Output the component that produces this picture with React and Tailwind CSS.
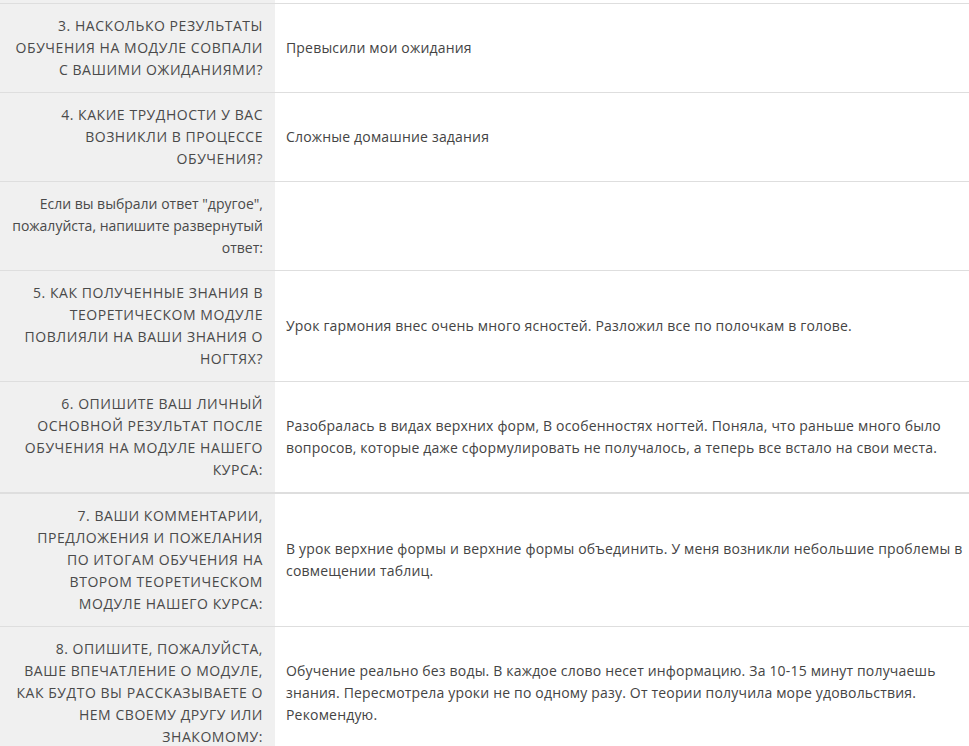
const rows = [
  {
    q: ['3. НАСКОЛЬКО РЕЗУЛЬТАТЫ', 'ОБУЧЕНИЯ НА МОДУЛЕ СОВПАЛИ', 'С ВАШИМИ ОЖИДАНИЯМИ?'],
    a: ['Превысили мои ожидания'],
  },
  {
    q: ['4. КАКИЕ ТРУДНОСТИ У ВАС', 'ВОЗНИКЛИ В ПРОЦЕССЕ', 'ОБУЧЕНИЯ?'],
    a: ['Сложные домашние задания'],
  },
  {
    q: ['Если вы выбрали ответ "другое",', 'пожалуйста, напишите развернутый', 'ответ:'],
    a: [],
    plain: true,
  },
  {
    q: ['5. КАК ПОЛУЧЕННЫЕ ЗНАНИЯ В', 'ТЕОРЕТИЧЕСКОМ МОДУЛЕ', 'ПОВЛИЯЛИ НА ВАШИ ЗНАНИЯ О', 'НОГТЯХ?'],
    a: ['Урок гармония внес очень много ясностей. Разложил все по полочкам в голове.'],
  },
  {
    q: ['6. ОПИШИТЕ ВАШ ЛИЧНЫЙ', 'ОСНОВНОЙ РЕЗУЛЬТАТ ПОСЛЕ', 'ОБУЧЕНИЯ НА МОДУЛЕ НАШЕГО', 'КУРСА:'],
    a: [
      'Разобралась в видах верхних форм, В особенностях ногтей. Поняла, что раньше много было',
      'вопросов, которые даже сформулировать не получалось, а теперь все встало на свои места.',
    ],
    thick: true,
  },
  {
    q: [
      '7. ВАШИ КОММЕНТАРИИ,',
      'ПРЕДЛОЖЕНИЯ И ПОЖЕЛАНИЯ',
      'ПО ИТОГАМ ОБУЧЕНИЯ НА',
      'ВТОРОМ ТЕОРЕТИЧЕСКОМ',
      'МОДУЛЕ НАШЕГО КУРСА:',
    ],
    a: [
      'В урок верхние формы и верхние формы объединить. У меня возникли небольшие проблемы в',
      'совмещении таблиц.',
    ],
  },
  {
    q: [
      '8. ОПИШИТЕ, ПОЖАЛУЙСТА,',
      'ВАШЕ ВПЕЧАТЛЕНИЕ О МОДУЛЕ,',
      'КАК БУДТО ВЫ РАССКАЗЫВАЕТЕ О',
      'НЕМ СВОЕМУ ДРУГУ ИЛИ',
      'ЗНАКОМОМУ:',
    ],
    a: [
      'Обучение реально без воды. В каждое слово несет информацию. За 10-15 минут получаешь',
      'знания. Пересмотрела уроки не по одному разу. От теории получила море удовольствия.',
      'Рекомендую.',
    ],
  },
];

function Row({ q, a, thick, plain }) {
  return (
    <div className={`flex ${thick ? 'border-b-2' : 'border-b'} border-[#dedede]`}>
      <div
        className={`w-[275px] shrink-0 bg-[#f0f0f0] py-[11px] pl-3 pr-3 text-right text-[#4a4a4a] ${
          plain ? '' : 'tracking-[0.55px]'
        }`}
      >
        {q.map((line, i) => (
          <div key={i} className="whitespace-nowrap">{line}</div>
        ))}
      </div>
      <div className="flex-1 flex flex-col justify-center py-[11px] pl-[11px] pr-2 text-[#444] tracking-[0.18px]">
        {a.map((line, i) => (
          <div key={i} className="whitespace-nowrap">{line}</div>
        ))}
      </div>
    </div>
  );
}

export default function App() {
  return (
    <div
      className="w-[969px] h-[746px] overflow-hidden bg-white text-[14px] leading-[22px]"
      style={{ fontFamily: '"Open Sans", "Liberation Sans", sans-serif' }}
    >
      <div className="flex h-[4px] border-b border-[#dedede]">
        <div className="w-[275px] bg-[#f0f0f0]" />
        <div className="flex-1" />
      </div>
      {rows.map((r, i) => (
        <Row key={i} {...r} />
      ))}
    </div>
  );
}
